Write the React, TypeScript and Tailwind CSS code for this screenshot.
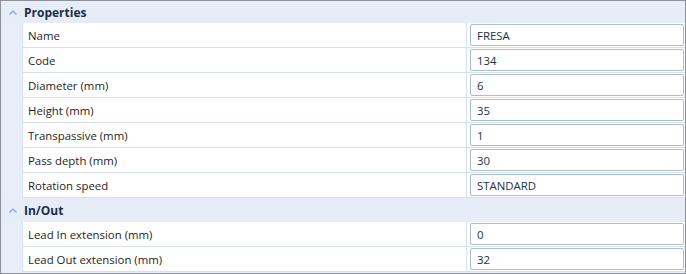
import React from "react";

type Row = { label: string; value: string };

const groups: { title: string; rows: Row[] }[] = [
  {
    title: "Properties",
    rows: [
      { label: "Name", value: "FRESA" },
      { label: "Code", value: "134" },
      { label: "Diameter (mm)", value: "6" },
      { label: "Height (mm)", value: "35" },
      { label: "Transpassive (mm)", value: "1" },
      { label: "Pass depth (mm)", value: "30" },
      { label: "Rotation speed", value: "STANDARD" },
    ],
  },
  {
    title: "In/Out",
    rows: [
      { label: "Lead In extension (mm)", value: "0" },
      { label: "Lead Out extension (mm)", value: "32" },
    ],
  },
];

function Chevron() {
  return (
    <svg width="8" height="5" viewBox="0 0 8 5" className="ml-[8px] mr-[7px]">
      <path d="M0.5 4.5 L4 1 L7.5 4.5" fill="none" stroke="#8aa2c4" strokeWidth="1.2" />
    </svg>
  );
}

export default function App() {
  return (
    <div
      className="w-[686px] h-[274px] bg-[#e8eef9] border border-[#8c9099] overflow-hidden text-[11.4px] text-[#1e1e1e]"
      style={{ fontFamily: '"Open Sans", "Noto Sans", sans-serif' }}
    >
      {groups.map((g, gi) => (
        <div key={g.title}>
          <div className={`flex items-center pt-[1px] ${gi === 0 ? "h-[22px]" : "h-[24px]"} bg-[#e6edf9]`}>
            <Chevron />
            <span className="font-bold text-[12px] text-[#1f2d46]">{g.title}</span>
          </div>
          <div className="ml-[21px]">
            {g.rows.map((r) => (
              <div
                key={r.label}
                className="flex h-[25px] bg-white border-l border-b border-[#d6e0ee]"
              >
                <div className="w-[444px] border-r border-[#d6e0ee] flex items-center pl-[5px] pt-[2px]">
                  {r.label}
                </div>
                <div className="flex-1 flex items-center pl-[3px] pr-[1px]">
                  <div className="w-full h-[22px] border border-[#aebcd0] rounded-[2px] flex items-center pl-[6px] pt-[2px] text-[#22324a]">
                    {r.value}
                  </div>
                </div>
              </div>
            ))}
          </div>
        </div>
      ))}
    </div>
  );
}
